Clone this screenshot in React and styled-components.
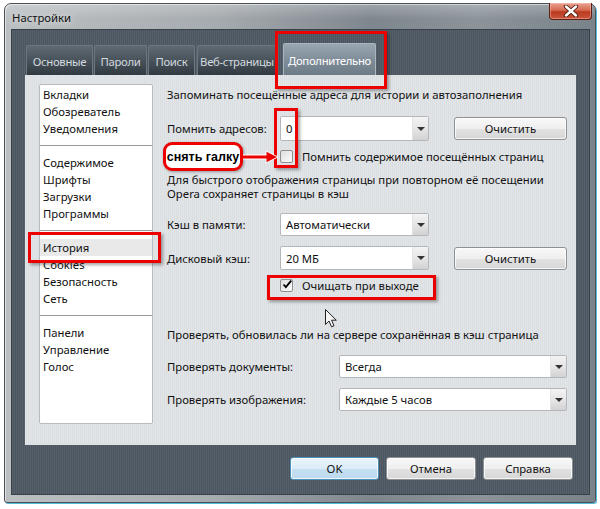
import React from 'react';
import styled, { createGlobalStyle } from 'styled-components';

const GlobalStyle = createGlobalStyle`
  html, body { margin: 0; padding: 0; background: #fff; }
  body { font-family: "Noto Sans", "Open Sans", sans-serif; }
`;

const FS = '11.3px';

const Page = styled.div`
  position: relative;
  width: 600px;
  height: 509px;
  padding: 3px 4px 0;
  box-sizing: border-box;
  background: #fff;
  overflow: hidden;
`;

const Window = styled.div`
  width: 592px;
  height: 500px;
  box-sizing: border-box;
  display: flex;
  flex-direction: column;
  border: 1px solid #4a5157;
  border-radius: 7px 7px 3px 3px;
  background: linear-gradient(90deg, #bcc0c3 0%, #a7acb0 35%, #7f878e 62%, #8c949a 80%, #7a838a 100%);
  box-shadow: 1px 1px 0 #52bcd8, inset 1px 1px 0 rgba(255,255,255,0.5);
`;

const TitleBar = styled.div`
  height: 25px;
  display: flex;
  justify-content: space-between;
  padding-left: 7px;
  padding-right: 3px;
  background: linear-gradient(180deg, rgba(255,255,255,0.25), rgba(255,255,255,0) 60%);
  border-radius: 6px 6px 0 0;
`;

const Title = styled.div`
  align-self: center;
  font-size: ${FS};
  color: #111;
  text-shadow: 0 0 6px rgba(255,255,255,0.9);
  margin-top: 1px;
`;

const CloseButton = styled.div`
  width: 43px;
  height: 17px;
  margin-top: -1px;
  box-sizing: border-box;
  border: 1px solid #5b2014;
  border-top: none;
  border-radius: 0 0 4px 4px;
  background: linear-gradient(180deg, #e8a292 0%, #d66a52 45%, #b93a20 55%, #c9553a 100%);
  display: flex;
  align-items: center;
  justify-content: center;
  box-shadow: inset 0 0 0 1px rgba(255,200,190,0.45);
`;

const Client = styled.div`
  flex: 1;
  margin: 0 5px 7px 6px;
  padding: 13px 13px 0 13px;
  display: flex;
  flex-direction: column;
  border: 1px solid #3a4249;
  box-sizing: border-box;
  background: repeating-linear-gradient(90deg, #56616b 0 1px, #4a5560 1px 2px);
`;

const TabRow = styled.div`
  height: 32px;
  display: flex;
  align-items: flex-end;
`;

const Tab = styled.div`
  width: ${p => p.w}px;
  margin-right: ${p => p.gap}px;
  height: ${p => (p.active ? 32 : 30)}px;
  box-sizing: border-box;
  display: flex;
  align-items: center;
  justify-content: center;
  white-space: nowrap;
  font-size: ${FS};
  letter-spacing: -0.3px;
  color: ${p => (p.active ? '#ffffff' : '#d3d9de')};
  border: 1px solid ${p => (p.active ? '#aab5be' : '#6c767f')};
  border-bottom: none;
  border-radius: 2px 2px 0 0;
  background: ${p =>
    p.active
      ? 'linear-gradient(180deg, #9aa7b2 0%, #808e9a 50%, #6d7b87 100%)'
      : 'linear-gradient(180deg, #606a73 0%, #48525b 50%, #323a40 100%)'};
  padding-top: 2px;
`;

const Panel = styled.div`
  height: 370px;
  box-sizing: border-box;
  display: flex;
  gap: 14px;
  padding: 9px 0 0 14px;
  background: repeating-linear-gradient(90deg, #e2e5e8 0 1px, #dcdfe2 1px 2px);
`;

const List = styled.div`
  width: 114px;
  height: 340px;
  box-sizing: border-box;
  background: #fff;
  border: 1px solid #b7bcc1;
  border-radius: 2px;
  padding-top: 1px;
`;

const ListItem = styled.div`
  height: 17px;
  line-height: 17px;
  padding-left: 3px;
  font-size: ${FS};
  color: #111;
  background: ${p => (p.selected ? '#e9e9e9' : 'transparent')};
`;

const ListSeparator = styled.div`
  height: 1px;
  margin: 8px 0;
  background: #9a9a9a;
`;

const Content = styled.div`
  flex: 1;
  display: flex;
  flex-direction: column;
`;

const Text = styled.div`
  margin-top: ${p => p.mt}px;
  font-size: ${FS};
  line-height: 14px;
  color: #111;
  white-space: nowrap;
`;

const Row = styled.div`
  margin-top: ${p => p.mt}px;
  height: ${p => p.h}px;
  display: flex;
  align-items: center;
`;

const Label = styled.div`
  width: ${p => p.w}px;
  font-size: ${FS};
  color: #111;
`;

const Combo = styled.div`
  width: ${p => p.w}px;
  height: 100%;
  box-sizing: border-box;
  display: flex;
  border: 1px solid #b3b7bb;
  border-radius: 2px;
  background: #fff;
`;

const ComboValue = styled.div`
  flex: 1;
  display: flex;
  align-items: center;
  padding-left: 5px;
  font-size: ${FS};
  color: #111;
`;

const ComboArrow = styled.div`
  width: 15px;
  display: flex;
  align-items: center;
  justify-content: center;
  border-left: 1px solid #e4e4e4;
  background: linear-gradient(180deg, #f3f3f3 0%, #e6e6e6 50%, #d2d2d2 100%);

  &::after {
    content: '';
    border-left: 4px solid transparent;
    border-right: 4px solid transparent;
    border-top: 4px solid #333;
  }
`;

const Button = styled.div`
  width: ${p => p.w}px;
  height: ${p => p.h || 23}px;
  margin-left: ${p => p.ml || 0}px;
  box-sizing: border-box;
  display: flex;
  align-items: center;
  justify-content: center;
  font-size: ${FS};
  color: #111;
  border: 1px solid ${p => (p.primary ? '#4c8fb8' : '#8e9193')};
  border-radius: 3px;
  background: ${p =>
    p.primary
      ? 'linear-gradient(180deg, #eaf4fb 0%, #dcecf8 50%, #c6e0f2 51%, #bcd9ef 100%)'
      : 'linear-gradient(180deg, #f8f8f8 0%, #efefef 50%, #e2e2e2 51%, #d6d6d6 100%)'};
  box-shadow: inset 0 0 0 1px rgba(255,255,255,0.75);
`;

const CheckBox = styled.div`
  width: 13px;
  height: 13px;
  box-sizing: border-box;
  border: 1px solid #8f8f8f;
  border-radius: 2px;
  background: linear-gradient(135deg, #dedede 0%, #fbfbfb 100%);
  display: flex;
  align-items: center;
  justify-content: center;
  overflow: visible;
`;

const CheckLabel = styled.div`
  margin-left: 9px;
  font-size: ${FS};
  color: #111;
`;

const Indent = styled.div`
  width: 113px;
`;

const ButtonRow = styled.div`
  margin-top: 12px;
  display: flex;
  justify-content: flex-end;
  gap: 7px;
  padding-right: 3px;
`;

/* annotations drawn over the screenshot */
const Mark = styled.div`
  position: absolute;
  left: ${p => p.x}px;
  top: ${p => p.y}px;
  width: ${p => p.w}px;
  height: ${p => p.h}px;
  box-sizing: border-box;
  border: 3px solid #ec0000;
  box-shadow: 2px 2px 3px rgba(0,0,0,0.35);
  pointer-events: none;
`;

const Bubble = styled.div`
  position: absolute;
  left: 163px;
  top: 142px;
  width: 80px;
  height: 29px;
  box-sizing: border-box;
  border: 3px solid #ec0000;
  border-radius: 9px;
  background: #fff;
  display: flex;
  align-items: center;
  justify-content: center;
  font-family: "Liberation Sans", Arial, sans-serif;
  font-weight: bold;
  font-size: 12.5px;
  color: #000;
  box-shadow: 1px 1px 3px rgba(0,0,0,0.35);
`;

const Floating = styled.svg`
  position: absolute;
  left: ${p => p.x}px;
  top: ${p => p.y}px;
  overflow: visible;
`;

const Check = () => (
  <svg width="13" height="13" viewBox="0 0 13 13" style={{ marginTop: -2, marginLeft: 1 }}>
    <path d="M2 6.5 L5 9.8 L12 1.5" fill="none" stroke="#000" strokeWidth="2.4" strokeLinejoin="miter" />
  </svg>
);

const ListGroup = ({ items, selected }) =>
  items.map(t => (
    <ListItem key={t} selected={t === selected}>
      {t}
    </ListItem>
  ));

export default function App() {
  return (
    <Page>
      <GlobalStyle />
      <Window>
        <TitleBar>
          <Title>Настройки</Title>
          <CloseButton>
            <svg width="16" height="12" viewBox="0 0 16 12">
              <path d="M3 1.5 L13 10.5 M13 1.5 L3 10.5" stroke="#4a1a10" strokeWidth="4.2" strokeLinecap="round" />
              <path d="M3 1.5 L13 10.5 M13 1.5 L3 10.5" stroke="#ffffff" strokeWidth="2.4" strokeLinecap="round" />
            </svg>
          </CloseButton>
        </TitleBar>
        <Client>
          <TabRow>
            <Tab w={67} gap={1} style={{ marginLeft: 1 }}>Основные</Tab>
            <Tab w={53} gap={1}>Пароли</Tab>
            <Tab w={47} gap={2}>Поиск</Tab>
            <Tab w={80} gap={6}>Веб-страницы</Tab>
            <Tab w={93} gap={0} active>Дополнительно</Tab>
          </TabRow>
          <Panel>
            <List>
              <ListGroup items={['Вкладки', 'Обозреватель', 'Уведомления']} />
              <ListSeparator />
              <ListGroup items={['Содержимое', 'Шрифты', 'Загрузки', 'Программы']} />
              <ListSeparator />
              <ListGroup items={['История', 'Cookies', 'Безопасность', 'Сеть']} selected="История" />
              <ListSeparator />
              <ListGroup items={['Панели', 'Управление', 'Голос']} />
            </List>
            <Content>
              <Text mt={4}>Запоминать посещённые адреса для истории и автозаполнения</Text>
              <Row mt={14} h={25}>
                <Label w={113}>Помнить адресов:</Label>
                <Combo w={149}>
                  <ComboValue>0</ComboValue>
                  <ComboArrow />
                </Combo>
                <Button w={113} ml={25}>Очистить</Button>
              </Row>
              <Row mt={9} h={13}>
                <Indent />
                <CheckBox />
                <CheckLabel>Помнить содержимое посещённых страниц</CheckLabel>
              </Row>
              <Text mt={10}>
                Для быстрого отображения страницы при повторном её посещении
                <br />
                Opera сохраняет страницы в кэш
              </Text>
              <Row mt={12} h={23}>
                <Label w={113}>Кэш в памяти:</Label>
                <Combo w={149}>
                  <ComboValue>Автоматически</ComboValue>
                  <ComboArrow />
                </Combo>
              </Row>
              <Row mt={10} h={24}>
                <Label w={113}>Дисковый кэш:</Label>
                <Combo w={149}>
                  <ComboValue>20 МБ</ComboValue>
                  <ComboArrow />
                </Combo>
                <Button w={113} ml={25}>Очистить</Button>
              </Row>
              <Row mt={9} h={13}>
                <Indent />
                <CheckBox>
                  <Check />
                </CheckBox>
                <CheckLabel>Очищать при выходе</CheckLabel>
              </Row>
              <Text mt={36}>Проверять, обновилась ли на сервере сохранённая в кэш страница</Text>
              <Row mt={13} h={23}>
                <Label w={172}>Проверять документы:</Label>
                <Combo w={228}>
                  <ComboValue>Всегда</ComboValue>
                  <ComboArrow />
                </Combo>
              </Row>
              <Row mt={10} h={23}>
                <Label w={172}>Проверять изображения:</Label>
                <Combo w={228}>
                  <ComboValue>Каждые 5 часов</ComboValue>
                  <ComboArrow />
                </Combo>
              </Row>
            </Content>
          </Panel>
          <ButtonRow>
            <Button w={89} primary>OK</Button>
            <Button w={90}>Отмена</Button>
            <Button w={90}>Справка</Button>
          </ButtonRow>
        </Client>
      </Window>

      <Mark x={275} y={31} w={112} h={58} />
      <Mark x={274} y={108} w={24} h={60} />
      <Mark x={28} y={232} w={133} h={31} />
      <Mark x={267} y={275} w={169} h={25} />
      <Bubble>снять галку</Bubble>
      <Floating x={242} y={149} width="38" height="16" viewBox="0 0 38 16">
        <path d="M1 8 L26 8" stroke="#fff" strokeWidth="5" />
        <path d="M24 2 L36 8 L24 14 Z" fill="#ec0000" stroke="#fff" strokeWidth="1" />
        <path d="M1 8 L25 8" stroke="#ec0000" strokeWidth="3" />
      </Floating>
      <Floating x={325} y={309} width="13" height="19" viewBox="0 0 13 19">
        <path d="M0.5 0.5 L0.5 15.5 L4 12 L6.5 17.8 L9 16.8 L6.6 11.2 L11.3 11.2 Z" fill="#f4f4f4" stroke="#222" strokeWidth="1" strokeLinejoin="round" />
      </Floating>
    </Page>
  );
}
